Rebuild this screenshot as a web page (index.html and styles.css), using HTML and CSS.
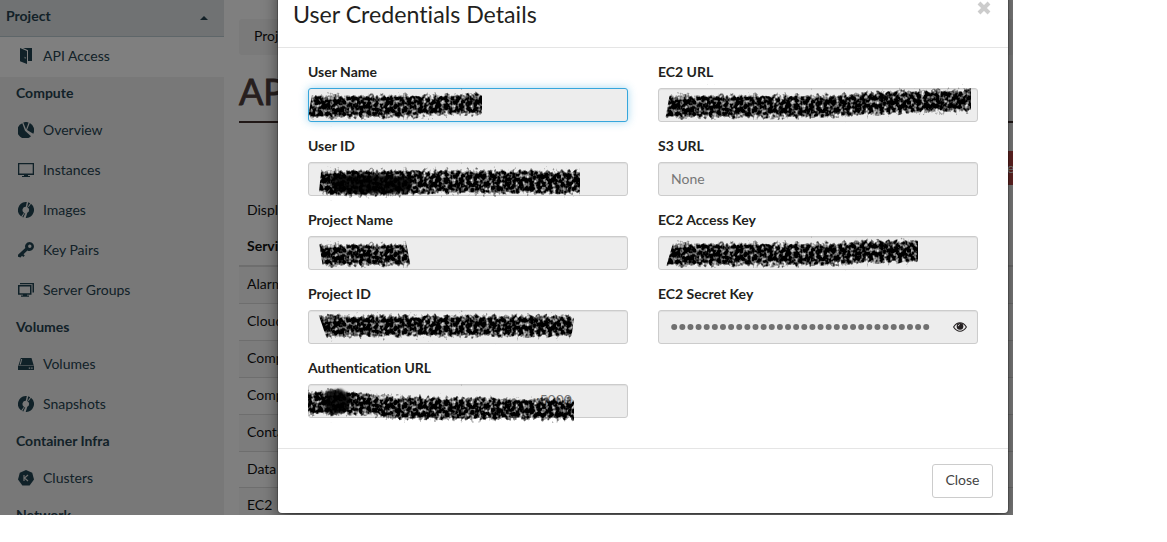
FILE: index.html
```
<!DOCTYPE html>
<html lang="en">
<head>
<meta charset="utf-8">
<title>API Access</title>
<link rel="stylesheet" href="styles.css">
</head>
<body>
<svg class="defs" width="0" height="0" aria-hidden="true">
  <defs>
    <filter id="brush" filterUnits="userSpaceOnUse" x="-10" y="-10" width="345" height="55" color-interpolation-filters="sRGB">
      <feGaussianBlur in="SourceAlpha" stdDeviation="1.5 2.4" result="soft"/>
      <feTurbulence type="fractalNoise" baseFrequency="0.27 0.24" numOctaves="2" seed="7" result="noise"/>
      <feComposite in="soft" in2="noise" operator="arithmetic" k1="0" k2="1.8" k3="2.6" k4="-2.15"/>
      <feColorMatrix type="matrix" values="0 0 0 0 0  0 0 0 0 0  0 0 0 0 0  0 0 0 1 0"/>
      <feGaussianBlur stdDeviation="0.4"/>
    </filter>
    <symbol id="disc" viewBox="0 0 16 16">
      <path fill-rule="evenodd" d="M7.400 0A8 8 0 0 0 3.200 14.400L6 10.700A3.200 3.200 0 0 1 7.800 4.800L8.800 0ZM10.200 0.300L9.200 5A3.200 3.200 0 0 1 9.300 10.800L7.700 16A8 8 0 0 0 13 1.800L10.800 5.100L10 4.500L12.200 1.200ZM6.400 11.200L4.300 15L5.300 15.500L7.300 11.300Z"/>
    </symbol>
  </defs>
</svg>
<div class="page">
  <nav class="sidebar">
    <div class="side-head"><span>Project</span><i class="caret"></i></div>
    <a class="item active"><svg class="icon" viewBox="0 0 16 16"><path d="M2 0L9 3V16L2 13.200ZM6.600 8.800V10.300L7.600 10.700V9.200ZM5 0H14V13H10V2.300Z" fill-rule="evenodd"/></svg>API Access</a>
    <h4>Compute</h4>
    <a class="item"><svg class="icon" viewBox="0 0 16 16"><path d="M5.300 .5A8 8 0 0 1 10.600 .4L8.100 7.400ZM4.300 1.200A8 8 0 1 0 13 14.200L7 8.700ZM11.800 1.100A8 8 0 0 1 15.300 11.800L9 8Z"/></svg>Overview</a>
    <a class="item"><svg class="icon" viewBox="0 0 16 16"><path fill-rule="evenodd" d="M0 1H16V13H10V14H12V15H4V14H6V13H0ZM1.300 2.300V11.500H14.700V2.300Z"/></svg>Instances</a>
    <a class="item"><svg class="icon"><use href="#disc"/></svg>Images</a>
    <a class="item"><svg class="icon" viewBox="0 0 16 16"><path fill-rule="evenodd" d="M11.500 0A4.500 4.500 0 1 1 9.400 8.500L5.500 12.300L6.800 13.500L5.300 15L4 13.800L2.500 15.600L0 14.800V12.800L7.300 6A4.500 4.500 0 0 1 11.500 0ZM11.800 2.600A1.700 1.700 0 1 0 11.800 6A1.700 1.700 0 0 0 11.800 2.600Z"/></svg>Key Pairs</a>
    <a class="item"><svg class="icon" viewBox="0 0 16 16"><path fill-rule="evenodd" d="M2 1H16V10.500H14.500V2.300H2ZM0 3H13.500V12.700H9V13.600H11V14.800H3V13.600H5V12.700H0ZM1.500 4.500V11.200H12V4.500Z"/></svg>Server Groups</a>
    <h4>Volumes</h4>
    <a class="item"><svg class="icon" viewBox="0 0 16 16"><path fill-rule="evenodd" d="M2.800 2H13.500L15.600 9H.6ZM3.200 3L1.700 8.500H2.800L4.200 3ZM0 9.500H16V14H0ZM10.800 11.500V12.700H12.200V11.500ZM13.200 11.500V12.700H14.600V11.500Z"/></svg>Volumes</a>
    <a class="item"><svg class="icon"><use href="#disc"/></svg>Snapshots</a>
    <h4>Container Infra</h4>
    <a class="item"><svg class="icon" viewBox="0 0 16 16"><path d="M8 0L14.200 2.800L16 9.500L11.600 15.500H4.400L0 9.500L1.800 2.800Z"/><path class="line" d="M6 5V11M10 5L6.500 8L10 11"/></svg>Clusters</a>
    <h4>Network</h4>
  </nav>
  <main class="main">
    <div class="crumbs">Project</div>
    <h1>API Access</h1>
    <div class="actions"><span class="danger">er</span></div>
    <div class="count">Displaying 12 items</div>
    <div class="th">Service</div>
    <div class="row odd">Alarming</div>
    <div class="row">Cloudformation</div>
    <div class="row odd">Compute</div>
    <div class="row">Compute</div>
    <div class="row odd">Container</div>
    <div class="row short">Data Processing</div>
    <div class="row odd">EC2</div>
  </main>
  <div class="backdrop"></div>
  <section class="modal">
    <header><h3>User Credentials Details</h3><svg class="x" viewBox="0 0 14 14"><path d="M2 2L12 12M12 2L2 12"/></svg></header>
    <div class="body">
      <div class="col">
        <label>User Name</label>
        <div class="field focus"><svg class="ink" viewBox="0 0 320 34"><g class="clip-a"><g filter="url(#brush)"><path d="M-4 7H125L180 5V27H140L100 30H-4Z"/></g></g></svg></div>
        <label>User ID</label>
        <div class="field"><svg class="ink" viewBox="0 0 320 34"><g class="clip-b"><g filter="url(#brush)"><path d="M6 8H280V32H112L90 34H30L6 31Z"/></g><path class="dense" d="M22 14Q55 10 105 16L102 29Q60 34 26 29Z"/></g></svg></div>
        <label>Project Name</label>
        <div class="field"><svg class="ink" viewBox="0 0 320 34"><g class="clip-c"><g filter="url(#brush)"><path d="M5 8H110V30H5Z"/></g></g></svg></div>
        <label>Project ID</label>
        <div class="field"><svg class="ink" viewBox="0 0 320 34"><g class="clip-d"><g filter="url(#brush)"><path d="M5 5H280V27H5Z"/></g></g></svg></div>
        <label>Authentication URL</label>
        <div class="field"><span class="port">:5000</span><svg class="ink" viewBox="0 0 320 34"><g class="clip-e"><g filter="url(#brush)"><path d="M-5 8L25 6L85 12L280 15V36H90L60 31H-5Z"/></g><path class="dense" d="M18 7L33 5L43 12L40 26L28 30L17 27Z"/></g></svg></div>
      </div>
      <div class="col">
        <label>EC2 URL</label>
        <div class="field"><svg class="ink" viewBox="0 0 320 34"><g class="clip-f"><g filter="url(#brush)"><path d="M0 7H175L220 3L320 1V23L210 27L170 30H0Z"/></g></g></svg></div>
        <label>S3 URL</label>
        <div class="field none">None</div>
        <label>EC2 Access Key</label>
        <div class="field"><svg class="ink" viewBox="0 0 320 34"><g class="clip-g"><g filter="url(#brush)"><path d="M0 7H180L200 4H270V27H210L180 30H0Z"/></g></g></svg></div>
        <label>EC2 Secret Key</label>
        <div class="field"><svg class="dots" viewBox="0 0 260 8"><path d="M3.200 4H256"/></svg><svg class="eye" viewBox="0 0 14 10"><path class="lid" d="M.6 5Q3.300 .8 7 .8T13.400 5Q10.700 9.200 7 9.200T.6 5Z"/><circle cx="7" cy="4.400" r="3.300"/><path class="glint" d="M5.300 4.200Q5.400 2.700 6.800 2.500"/></svg></div>
      </div>
    </div>
    <footer><button>Close</button></footer>
  </section>
</div>
</body>
</html>
```
FILE: styles.css
```
* { box-sizing: border-box; }
body { margin: 0; background: #fff; font: 14px/20px Lato, sans-serif; font-variant-ligatures: none; color: #231f20; }
.defs { position: absolute; }
.page { position: relative; width: 1013px; height: 515px; overflow: hidden; display: flex; background: #fff; }
.sidebar { width: 224px; flex: none; background: #f0f0f0; color: #264350; }
.side-head { height: 37px; padding: 0 16px 5px 6px; display: flex; align-items: center; justify-content: space-between; font-weight: 700; background: #e0e4e6; border-bottom: 1px solid #bdcdd3; }
.caret { border: 4px solid transparent; border-top: 0; border-bottom-color: #264350; margin-top: 4px; }
.item { display: flex; align-items: center; height: 40px; padding-left: 18px; gap: 9px; }
.item.active { background: #fff; height: 40px; padding-bottom: 3px; }
.sidebar h4 { margin: 0; height: 34px; padding-left: 16px; font-size: 14px; line-height: 34px; }
.item.active + h4 { height: 33px; line-height: 32px; }
.icon { width: 16px; height: 16px; fill: #204350; flex: none; }
.line { fill: none; stroke: #ddd; stroke-width: 1.2; }
.main { flex: none; width: 790px; padding: 19px 0 0 15px; white-space: nowrap; color: #111; }
.crumbs { height: 36px; padding: 7px 15px; background: #f5f5f5; border-radius: 3px; }
.main h1 { margin: 16px 0 0; height: 52px; border-bottom: 2px solid #43302e; font-size: 36px; line-height: 41px; font-weight: 400; -webkit-text-stroke: .9px #4e3e3c; color: #4e3e3c; }
.actions { display: flex; justify-content: flex-end; margin-top: 28px; }
.danger { width: 7px; height: 34px; line-height: 33px; background: #c94a48; color: #fff; overflow: hidden; }
.count { margin-top: 15px; padding-left: 8px; }
.th { height: 47px; padding: 16px 8px; font-weight: 700; border-bottom: 2px solid #ddd; }
.row { height: 37px; padding: 7px 8px; border-bottom: 1px solid #ddd; }
.short { height: 36px; }
.odd { background: #f9f9f9; }
.backdrop { position: absolute; inset: 0; background: rgba(0,0,0,.5); }
.modal { position: absolute; left: 278px; top: -18px; width: 730px; height: 531px; background: #fff; border-radius: 4px; box-shadow: 0 0 0 1px rgba(0,0,0,.2), 0 5px 15px rgba(0,0,0,.5); }
.modal header { height: 66px; padding: 18px 16px 0 15px; display: flex; justify-content: space-between; border-bottom: 1px solid #e5e5e5; }
.modal h3 { margin: 0; font-size: 23.2px; line-height: 28px; font-weight: 400; }
.x { width: 14px; height: 14px; margin: 1px 1px 0 0; stroke: #ccc; stroke-width: 4; }
.body { display: flex; gap: 30px; padding: 14px 30px 0; height: 400px; }
.col { width: 320px; display: flex; flex-direction: column; }
.col label { font-weight: 700; line-height: 20px; margin-bottom: 6px; }
.field { position: relative; height: 34px; margin-bottom: 14px; padding: 0 12px; display: flex; align-items: center; border: 1px solid #ccc; border-radius: 3px; background: #ededed; color: #777; box-shadow: inset 0 1px 1px rgba(0,0,0,.06); }
.focus { border-color: #36a6dc; box-shadow: 0 0 8px rgba(54,166,220,.45); }
.ink { position: absolute; left: -1px; top: -1px; width: 320px; height: 34px; overflow: visible; }
.dense { fill: #000; opacity: .85; filter: blur(1.2px); }
.clip-a { clip-path: polygon(5px 0, 174px 0, 174px 40px, 0 40px, 1px 24px) view-box; }
.clip-b { clip-path: polygon(14px 0, 272px 0, 272px 40px, 10px 40px) view-box; }
.clip-c { clip-path: polygon(10px 0, 97px 0, 104px 38px, 16px 38px) view-box; }
.clip-d { clip-path: polygon(9px 0, 267px 0, 262px 38px, 22px 38px) view-box; }
.clip-e { clip-path: polygon(0 0, 266px 0, 266px 42px, 0 42px) view-box; }
.clip-f { clip-path: polygon(14px -6px, 313px -6px, 313px 38px, 6px 38px) view-box; }
.clip-g { clip-path: polygon(18px -3px, 260px -3px, 260px 38px, 6px 38px) view-box; }
.port { margin-left: 215px; margin-top: -3px; }
.dots { width: 260px; height: 8px; flex: none; stroke: #707070; stroke-width: 6; stroke-linecap: round; stroke-dasharray: 0 8.13; fill: none; }
.eye { width: 14px; height: 10px; margin-left: 22px; flex: none; fill: #231f20; }
.lid { fill: none; stroke: #231f20; stroke-width: 1.1; }
.glint { fill: none; stroke: #ededed; stroke-width: .8; }
.modal footer { border-top: 1px solid #e5e5e5; padding: 15px; display: flex; justify-content: flex-end; }
button { width: 61px; height: 34px; border: 1px solid #ccc; border-radius: 3px; background: #fff; font: 14px Lato, sans-serif; color: #444; padding: 0 0 3px; }
```
